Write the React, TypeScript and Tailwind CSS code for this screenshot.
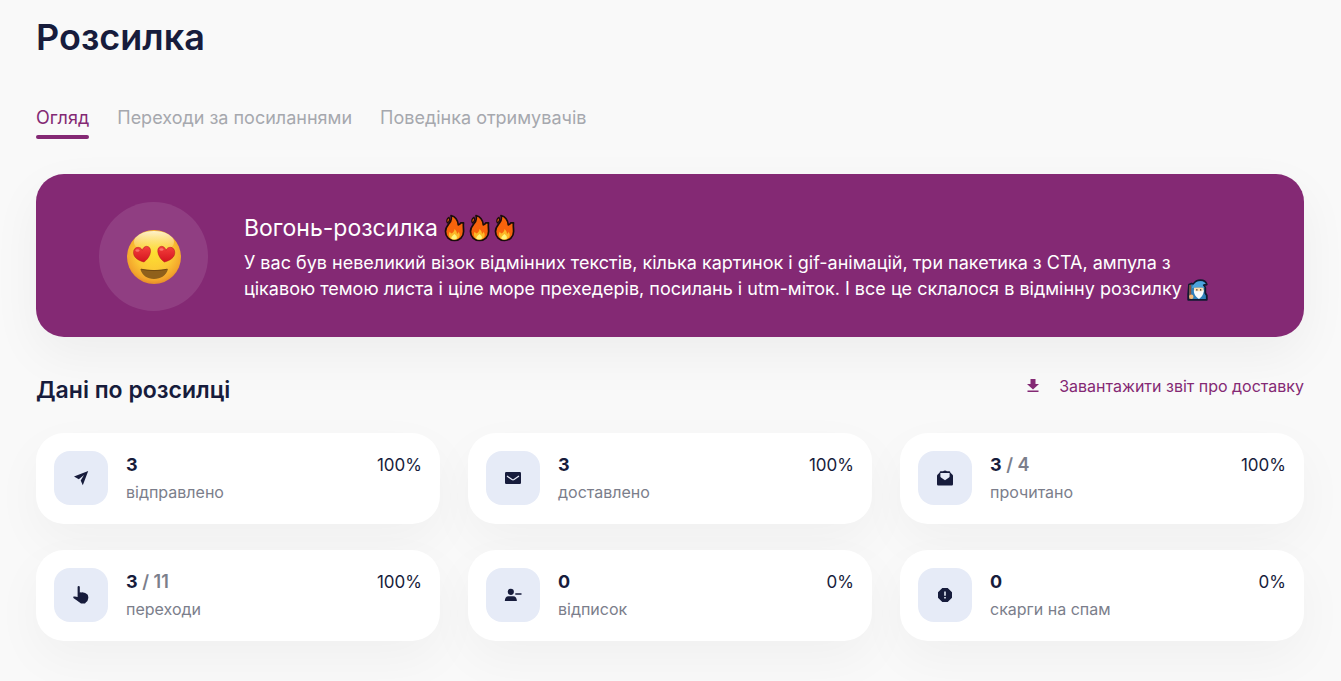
import type { ReactNode } from "react";

function LoveFace() {
  return (
    <svg viewBox="0 0 54 54" className="size-[54px]" role="img" aria-label="Закохане обличчя">
      <defs>
        <radialGradient id="face" cx="50%" cy="42%" r="60%">
          <stop offset="0" stopColor="#fde030" />
          <stop offset="0.55" stopColor="#fbc835" />
          <stop offset="0.85" stopColor="#f3a52c" />
          <stop offset="1" stopColor="#e2852a" />
        </radialGradient>
        <linearGradient id="shine" x1="0" y1="0" x2="0" y2="1">
          <stop offset="0" stopColor="#fffbe8" stopOpacity="0.85" />
          <stop offset="1" stopColor="#fff3a0" stopOpacity="0" />
        </linearGradient>
        <linearGradient id="heart" x1="0" y1="0" x2="0" y2="1">
          <stop offset="0" stopColor="#f5403c" />
          <stop offset="1" stopColor="#d4141f" />
        </linearGradient>
      </defs>
      <circle cx="27" cy="27" r="27" fill="url(#face)" />
      <ellipse cx="27" cy="12" rx="20" ry="11" fill="url(#shine)" />
      <path d="M13.300 39C21 40.500 33 40.500 41 39C39.500 45.500 33.500 49 27 49S15 45.500 13.300 39Z" fill="#8f601b" />
      <path d="M14 39.200C21 41 33 41 40.300 39.200" fill="none" stroke="#704812" strokeWidth="1" />
      <path
        d="M17 32C11 30.500 6.700 27.500 6.500 22.800C6.400 19.300 8.500 17.300 11 17.300C13 17.300 14.500 18.300 15.300 20.300C16 17.800 17.800 16.300 19.700 16.300C22.300 16.500 23.800 18.500 23.500 21.700C23 26 20.500 29.500 17 32Z"
        fill="url(#heart)"
        stroke="#b21820"
        strokeWidth="0.5"
      />
      <path
        d="M37.300 32C43.300 30.500 47.600 27.500 47.800 22.800C47.900 19.300 45.800 17.300 43.300 17.300C41.300 17.300 39.800 18.300 39 20.300C38.300 17.800 36.500 16.300 34.600 16.300C32 16.500 30.500 18.500 30.800 21.700C31.300 26 33.800 29.500 37.300 32Z"
        fill="url(#heart)"
        stroke="#b21820"
        strokeWidth="0.5"
      />
      <ellipse cx="10.500" cy="20.500" rx="2" ry="1.300" fill="#ff8b80" opacity="0.7" />
      <ellipse cx="34.500" cy="19.500" rx="2" ry="1.300" fill="#ff8b80" opacity="0.7" />
    </svg>
  );
}

function Flame() {
  return (
    <svg viewBox="0 0 21 28" className="h-7 w-[21px]" aria-hidden="true">
      <path
        d="M7 1.500C11 2.500 13.800 6 14.300 11C15.500 10.800 16.200 10.500 16.800 8.800H19.500C19 11.500 19.600 14 19.600 17.500C19.600 23 15.500 26.500 10.500 26.500S1.500 23 1.500 17.500C1.500 13.500 3.500 11.500 5.500 9C7.200 6.800 8 4.500 7 1.500Z"
        fill="#f7630c"
        stroke="#1a0d0b"
        strokeWidth="1.700"
        strokeLinejoin="round"
      />
      <path d="M5 3.300C2.800 4.500 2.200 7 3.400 9C5.600 8 6 5 5 3.300Z" fill="#f7630c" stroke="#1a0d0b" strokeWidth="1.300" />
      <path
        d="M10.500 15C12.300 16.500 12.800 18 13 19.800C14 19.500 14.300 18.700 14.600 17.800C15.800 19.500 16 21 15.500 22.500C14.800 24.600 13 25.600 10.500 25.600S5.500 24.500 5 22C4.600 20.300 5 19 5.700 17.800C6.200 18.700 6.800 19.200 7.600 19.500C9 18.500 10.500 17 10.500 15Z"
        fill="#fcb827"
      />
      <path d="M10.500 20C12.500 21.500 13.500 23 12.500 25C11 25.600 9 25.600 7.500 25C6.800 23 8.500 22 10.500 20Z" fill="#fff478" />
    </svg>
  );
}

function Wizard() {
  return (
    <svg viewBox="0 0 21 22" className="inline-block h-[22px] w-[21px] align-middle" role="img" aria-label="Чарівник">
      <path
        d="M1.200 20.800V15L2 5.500L4.500 4.500L6.500 5C8 2.500 10.500 1.200 13.500 1.200C16.500 1.200 19 2.700 19.800 5.500L16.800 6.200L18.300 9V14L19.800 16.500V20.800Z"
        fill="#2f7fb8"
        stroke="#101a30"
        strokeWidth="1.800"
        strokeLinejoin="round"
      />
      <path d="M2.200 6H4.200V20H2.200Z" fill="#88533c" />
      <path d="M7 8.500H16.500V13H7Z" fill="#fddfb0" />
      <path d="M4.800 9.300C6 5 9 2.200 13.500 2.200C16 2.200 18 3.300 18.700 5C17 4.900 15.800 5.200 15.500 6L17.800 9C14 7.700 9 7.700 4.800 9.300Z" fill="#4ba3dc" />
      <path d="M7 10.500L8.500 12.200H15L16.500 10.500C17.200 14.500 15.300 17.500 12 20C8.300 17.500 6.300 14.500 7 10.500Z" fill="#f8fbfa" />
      <path d="M9.200 10.800H10.500M13 10.800H14.300" stroke="#25232a" strokeWidth="1.200" />
      <circle cx="4.300" cy="17.800" r="2.200" fill="#f5bd79" />
    </svg>
  );
}

function Icon({ children }: { children: ReactNode }) {
  return (
    <svg viewBox="0 0 20 20" className="size-5 text-[#171c3c]" fill="currentColor" aria-hidden="true">
      {children}
    </svg>
  );
}

const stats: { value: string; total?: string; label: string; percent: string; icon: ReactNode }[] = [
  {
    value: "3",
    label: "відправлено",
    percent: "100%",
    icon: <path d="M17.200 3L3 8.500L7.800 11.200L13 7L9.700 12.600L11.800 17.200Z" />,
  },
  {
    value: "3",
    label: "доставлено",
    percent: "100%",
    icon: (
      <>
        <rect x="2" y="4" width="16" height="12" rx="1.200" />
        <path d="M4 8L9 11.600Q10 12.300 11 11.600L16 8" fill="none" stroke="#e6ebf7" strokeWidth="1.200" />
      </>
    ),
  },
  {
    value: "3",
    total: "4",
    label: "прочитано",
    percent: "100%",
    icon: (
      <path
        fillRule="evenodd"
        d="M8 3.300Q10 1.800 12 3.300H14.200Q15.300 3.300 15.300 4.400L17.500 6.700Q18 7.200 18 8V16.300Q18 17.500 16.800 17.500H3.200Q2 17.500 2 16.300V8Q2 7.200 2.500 6.700L4.700 4.400Q4.700 3.300 5.800 3.300ZM5.400 5V8.500Q5.400 9.200 6 9.600L10 12.200L14 9.600Q14.600 9.200 14.600 8.500V5Z"
      />
    ),
  },
  {
    value: "3",
    total: "11",
    label: "переходи",
    percent: "100%",
    icon: (
      <path d="M6.600 2Q6.600 1 7.700 1T8.800 2V7.500Q9.800 7.100 10.700 7.400Q12 7 13 7.700Q14.200 7.600 15 8.500Q17.300 9.200 17.300 12V13Q17 16.200 14.800 17.600L14 18.500H10L8.700 17.500L2.400 12.900Q2 12.100 2.600 11.600Q4.300 11.100 6.600 12Z" />
    ),
  },
  {
    value: "0",
    label: "відписок",
    percent: "0%",
    icon: (
      <>
        <circle cx="7.800" cy="6.800" r="3.100" />
        <path d="M1.800 16Q2 11.300 5.500 11.300H10.200Q13.700 11.300 13.900 16ZM12.300 8.200H18.500V9.800H12.300Z" />
      </>
    ),
  },
  {
    value: "0",
    label: "скарги на спам",
    percent: "0%",
    icon: (
      <path
        fillRule="evenodd"
        d="M7.300 3H12.700L17 7.300V12.700L12.700 17H7.300L3 12.700V7.300ZM9.200 6.500V10.800H10.800V6.500ZM9.200 12V13.600H10.800V12Z"
      />
    ),
  },
];

const tabs = ["Огляд", "Переходи за посиланнями", "Поведінка отримувачів"];

export default function App() {
  return (
    <main className="min-h-screen bg-[#f9f9f9] pt-3.5 pr-[37px] pb-10 pl-9 font-['Inter',sans-serif] text-[#171c3c]">
      <h1 className="text-4xl leading-[46px] font-semibold">Розсилка</h1>

      <nav className="mt-[45px] flex gap-7 text-lg leading-[26px]" aria-label="Розділи звіту">
        {tabs.map((tab, i) => (
          <a
            key={tab}
            href="#"
            aria-current={i === 0 ? "page" : undefined}
            className={i === 0 ? "text-[#842974]" : "text-[#a6a8ae]"}
          >
            {tab}
            {i === 0 && <span className="mt-1 block h-1 rounded-full bg-[#842974]" />}
          </a>
        ))}
      </nav>

      <section className="mt-[35px] flex items-center rounded-[28px] bg-[#842974] pt-7 pr-16 pb-[26px] pl-[63px] text-white shadow-[0_18px_50px_rgba(0,0,0,0.05)]">
        <div className="flex size-[109px] shrink-0 items-center justify-center rounded-full bg-white/10">
          <LoveFace />
        </div>
        <div className="ml-9">
          <h2 className="flex items-center gap-1.5 text-[23px] leading-8">
            Вогонь-розсилка
            <span className="flex gap-1" role="img" aria-label="Вогонь">
              <Flame />
              <Flame />
              <Flame />
            </span>
          </h2>
          <p className="mt-1.5 text-lg leading-[26px]">
            У вас був невеликий візок відмінних текстів, кілька картинок і gif-анімацій, три пакетика з СТА, ампула з
            цікавою темою листа і ціле море прехедерів, посилань і utm-міток. І все це склалося в відмінну розсилку{" "}
            <Wizard />
          </p>
        </div>
      </section>

      <div className="mt-[37px] flex items-center justify-between">
        <h2 className="text-[23px] leading-8 font-semibold">Дані по розсилці</h2>
        <a href="#" className="mb-2 flex items-center gap-4 text-base leading-6 text-[#842974]">
          <svg viewBox="0 0 20 20" className="size-5" fill="currentColor" aria-hidden="true">
            <path d="M7.500 3H12.500V8H16L10 13.500L4 8H7.500ZM4.500 14.500H15.500V16H4.500Z" />
          </svg>
          Завантажити звіт про доставку
        </a>
      </div>

      <ul className="mt-[27px] grid grid-cols-3 gap-x-7 gap-y-[26px]">
        {stats.map((s) => (
          <li
            key={s.label}
            className="flex rounded-[28px] bg-white p-[18px] shadow-[0_18px_50px_rgba(0,0,0,0.04)]"
          >
            <div className="flex size-[54px] shrink-0 items-center justify-center rounded-2xl bg-[#e6ebf7]">
              <Icon>{s.icon}</Icon>
            </div>
            <div className="ml-[18px] grow">
              <div className="text-lg leading-[27px] font-bold">
                {s.value}
                {s.total && <span className="font-semibold text-[#7b7e8b]"> / {s.total}</span>}
              </div>
              <div className="text-base leading-7 text-[#7b7e8b]">{s.label}</div>
            </div>
            <div className="text-[17px] leading-7">{s.percent}</div>
          </li>
        ))}
      </ul>
    </main>
  );
}
